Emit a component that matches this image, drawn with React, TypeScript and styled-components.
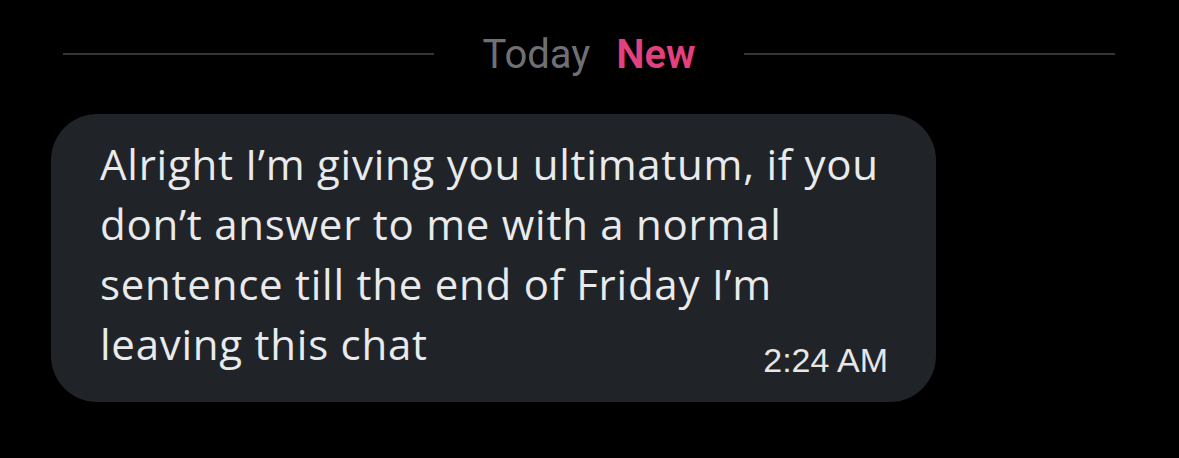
import styled, { createGlobalStyle } from 'styled-components';

const GlobalStyle = createGlobalStyle`
  html, body {
    margin: 0;
    padding: 0;
    background: #000;
  }
`;

const Screen = styled.div`
  width: 1179px;
  height: 458px;
  background: #000;
  box-sizing: border-box;
  padding: 24px 64px 0 51px;
  display: flex;
  flex-direction: column;
`;

const DateDivider = styled.div`
  display: flex;
  align-items: center;
  gap: 48px;
  padding-left: 12px;
  height: 60px;
`;

const Rule = styled.div`
  flex: 1;
  height: 2px;
  background: #333539;
`;

const DateLabel = styled.div`
  display: flex;
  gap: 26px;
  font-family: Roboto, 'Liberation Sans', sans-serif;
  font-size: 40px;
  letter-spacing: 0;
`;

const Label = styled.span<{ $accent?: boolean }>`
  color: ${p => (p.$accent ? '#e2407f' : '#6e7074')};
  font-weight: ${p => (p.$accent ? 600 : 400)};
`;

const Bubble = styled.div`
  margin-top: 30px;
  width: 885px;
  box-sizing: border-box;
  background: #202327;
  border-radius: 46px;
  padding: 20px 48px 24px 49px;
`;

const MessageText = styled.div`
  font-family: 'Open Sans', 'Noto Sans', sans-serif;
  font-size: 42px;
  letter-spacing: 0.75px;
  line-height: 60px;
  color: #e9eaeb;
`;

const LastRow = styled.div`
  display: flex;
  justify-content: space-between;
  align-items: baseline;
`;

const Time = styled.span`
  font-family: 'Liberation Sans', Arial, sans-serif;
  font-size: 34px;
  letter-spacing: 0;
  color: #e6e6e6;
  position: relative;
  top: 12px;
`;

const lines = [
  'Alright I’m giving you ultimatum, if you',
  'don’t answer to me with a normal',
  'sentence till the end of Friday I’m',
];

export default function App() {
  return (
    <>
      <GlobalStyle />
      <Screen>
        <DateDivider>
          <Rule />
          <DateLabel>
            <Label>Today</Label>
            <Label $accent>New</Label>
          </DateLabel>
          <Rule />
        </DateDivider>
        <Bubble>
          <MessageText>
            {lines.map(l => (
              <div key={l}>{l}</div>
            ))}
            <LastRow>
              <span>leaving this chat</span>
              <Time>2:24 AM</Time>
            </LastRow>
          </MessageText>
        </Bubble>
      </Screen>
    </>
  );
}
